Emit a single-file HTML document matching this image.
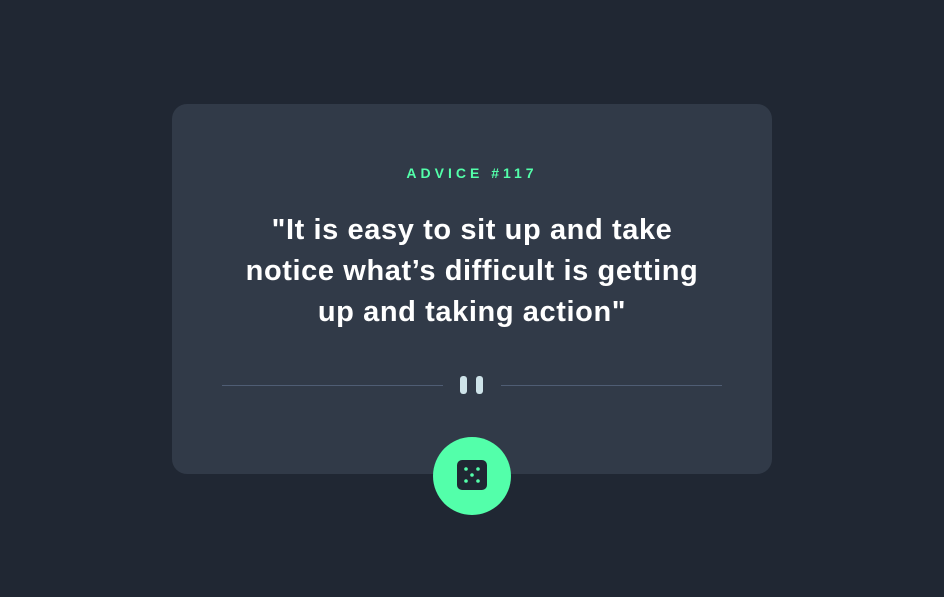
<!DOCTYPE html>
<html><head><style>
html,body{margin:0;padding:0;width:944px;height:597px;background:#202733;overflow:hidden;font-family:"Liberation Sans",sans-serif}
.card{position:absolute;left:172px;top:104px;width:600px;height:370px;background:#313a48;border-radius:15px}
.t{position:absolute;top:62px;left:0;width:600px;text-align:center;color:#53ffaa;font-size:14px;font-weight:bold;letter-spacing:4px;line-height:14px}
.q{position:absolute;top:106px;left:0;width:600px;text-align:center;font-size:29px;font-weight:bold;line-height:41px;color:#fff;letter-spacing:0.6px;white-space:nowrap}
.l{position:absolute;top:281px;height:1px;background:#4f5d74}
.b{position:absolute;top:272px;width:7px;height:18px;background:#cee3e9;border-radius:3px}
.btn{position:absolute;left:433px;top:437px;width:78px;height:78px;border-radius:50%;background:#53ffaa}
</style></head><body>
<div class="card">
<div class="t">ADVICE #117</div>
<div class="q">"It is easy to sit up and take<br>notice what’s difficult is getting<br>up and taking action"</div>
<div class="l" style="left:50px;width:221px"></div>
<div class="l" style="left:329px;width:221px"></div>
<div class="b" style="left:288px"></div>
<div class="b" style="left:304px"></div>
</div>
<div class="btn">
<svg width="78" height="78" viewBox="0 0 78 78" style="position:absolute;left:0;top:0">
<rect x="24" y="23" width="30" height="30" rx="5" fill="#202733"/>
<g fill="#53ffaa"><circle cx="33" cy="32" r="1.8"/><circle cx="45" cy="32" r="1.8"/><circle cx="39" cy="38" r="1.8"/><circle cx="33" cy="44" r="1.8"/><circle cx="45" cy="44" r="1.8"/></g>
</svg>
</div>
</body></html>
